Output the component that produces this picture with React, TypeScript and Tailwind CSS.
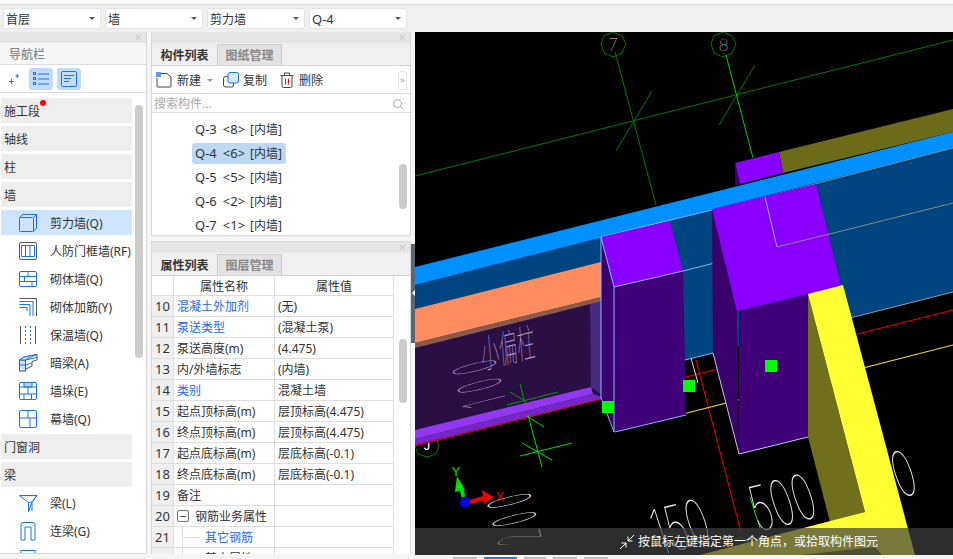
import { Search, X, ChevronsRight } from 'lucide-react';
import type { ReactNode } from 'react';

const blue = '#1a73e8';

function Icon({ children }: { children: ReactNode }) {
  return (
    <svg width="20" height="20" viewBox="0 0 20 20" fill="none" stroke={blue} strokeWidth="1" className="shrink-0">
      {children}
    </svg>
  );
}

const icons: Record<string, ReactNode> = {
  shear: (
    <Icon>
      <rect x="1.5" y="4.5" width="14" height="14" rx="1" />
      <path d="M1.5 4.5 L5 1.5 H18.5 V15 L15.5 18.5 M15.5 4.5 L18.5 1.5" />
    </Icon>
  ),
  frame: (
    <Icon>
      <rect x="1.5" y="1.5" width="17" height="17" rx="1.5" stroke="#555" />
      <path d="M3.5 4.5 H16.5 V15.5 H3.5 Z M7.5 4.5 V15.5 M12 4.5 V15.5" />
    </Icon>
  ),
  brick: (
    <Icon>
      <rect x="1.5" y="2.5" width="17" height="15" rx="1.5" />
      <path d="M1.5 7.5 H18.5 M1.5 12.5 H18.5 M10 2.5 V7.5 M6.5 7.5 V12.5 M14 12.5 V17.5" />
    </Icon>
  ),
  rebar: (
    <Icon>
      <path d="M1.5 4.5 H15 V19 M1.5 7.5 H12 V19 M1.5 10.5 H9 V14" />
      <path d="M18.5 1.5 V19 M1.5 1.5 H18.5" stroke="#555" />
    </Icon>
  ),
  insulation: (
    <Icon>
      <path d="M2.5 1 V19 M17.5 1 V19" stroke="#555" />
      <path d="M7.5 1 V19 M12.5 1 V19" strokeDasharray="2 2" />
    </Icon>
  ),
  hidden: (
    <Icon>
      <path d="M1.5 7 L6 4 L19 1.5 V7 L14 8.5 V13 L6 17" stroke="#555" />
      <rect x="1.5" y="7" width="6" height="11" fill="#cfe2fb" stroke="#555" />
      <path d="M1.5 7 L6 4 L19 1.5 L14 3.5 L7.5 7 Z" fill="#cfe2fb" />
      <path d="M7.5 7 L19 4.5 M1.5 12 H7.5 M7.5 12 L14 10" />
    </Icon>
  ),
  pier: (
    <Icon>
      <rect x="1.5" y="1.5" width="17" height="17" rx="1.5" />
      <path d="M6 1.5 H14 V6 H6 Z" fill="#bcd8f8" />
      <path d="M1.5 6 H18.5 M1.5 13 H18.5 M10 6 V13 M6 13 V18.5 M13.5 13 V18.5" />
    </Icon>
  ),
  curtain: (
    <Icon>
      <rect x="1.5" y="1.5" width="17" height="17" rx="1.5" />
      <path d="M1.5 9 H18.5 M10 1.5 V9 M12 9 V18.5" />
    </Icon>
  ),
  beam: (
    <Icon>
      <path d="M1.5 2.5 H19 L14 9 L10.5 18.5 V9.5 Z M10.5 9.5 L14 9 L19 2.5" />
      <path d="M14 9 V18" />
    </Icon>
  ),
  link: (
    <Icon>
      <path d="M3 19 V3.5 Q3 1.5 5 1.5 H15 Q17 1.5 17 3.5 V19 M3 19 H7 V6 H13 V19 H17" />
    </Icon>
  ),
  ring: (
    <Icon>
      <rect x="3" y="1.5" width="14" height="16" />
      <rect x="6" y="4.5" width="8" height="6" />
    </Icon>
  ),
};

const navRows: { label: string; icon?: string; active?: boolean; dot?: boolean }[] = [
  { label: '施工段', dot: true },
  { label: '轴线' },
  { label: '柱' },
  { label: '墙' },
  { label: '剪力墙(Q)', icon: 'shear', active: true },
  { label: '人防门框墙(RF)', icon: 'frame' },
  { label: '砌体墙(Q)', icon: 'brick' },
  { label: '砌体加筋(Y)', icon: 'rebar' },
  { label: '保温墙(Q)', icon: 'insulation' },
  { label: '暗梁(A)', icon: 'hidden' },
  { label: '墙垛(E)', icon: 'pier' },
  { label: '幕墙(Q)', icon: 'curtain' },
  { label: '门窗洞' },
  { label: '梁' },
  { label: '梁(L)', icon: 'beam' },
  { label: '连梁(G)', icon: 'link' },
  { label: '圈梁(B)', icon: 'ring' },
];

const components = [
  { code: 'Q-3', count: 8 },
  { code: 'Q-4', count: 6, active: true },
  { code: 'Q-5', count: 5 },
  { code: 'Q-6', count: 2 },
  { code: 'Q-7', count: 1 },
];

const props: { no: number; name: string; value?: string; link?: boolean }[] = [
  { no: 10, name: '混凝土外加剂', value: '(无)', link: true },
  { no: 11, name: '泵送类型', value: '(混凝土泵)', link: true },
  { no: 12, name: '泵送高度(m)', value: '(4.475)' },
  { no: 13, name: '内/外墙标志', value: '(内墙)' },
  { no: 14, name: '类别', value: '混凝土墙', link: true },
  { no: 15, name: '起点顶标高(m)', value: '层顶标高(4.475)' },
  { no: 16, name: '终点顶标高(m)', value: '层顶标高(4.475)' },
  { no: 17, name: '起点底标高(m)', value: '层底标高(-0.1)' },
  { no: 18, name: '终点底标高(m)', value: '层底标高(-0.1)' },
  { no: 19, name: '备注' },
];

function Select({ label }: { label: string }) {
  return (
    <div className="flex h-[21px] w-[98px] items-center justify-between rounded-[3px] border border-[#e4e4e4] bg-white pl-[2px] pr-[5px]">
      <span className={`pt-[2px] ${label.startsWith('Q') ? 'text-[13px]' : ''}`}>{label}</span>
      <span className="h-0 w-0 border-x-[3px] border-t-[3px] border-x-transparent border-t-[#555]" />
    </div>
  );
}

function PanelHeader() {
  return (
    <div className="flex h-[11px] shrink-0 items-center justify-end bg-[#e5e5e5] pr-[3px] text-[#999]">
      <X size={9} strokeWidth={1.2} />
    </div>
  );
}

function Tabs({ first, second }: { first: string; second: string }) {
  return (
    <div className="flex h-[23px] shrink-0 border-b border-[#d4d4d4] bg-[#f0f0f0] pt-px font-bold">
      <div className="flex w-[65px] items-center justify-center pt-[2px] text-[#333]">{first}</div>
      <div className="flex w-[65px] items-center justify-center border-x border-t border-[#ccc] bg-[#e2e2e2] pt-[2px] text-[#888]">
        {second}
      </div>
    </div>
  );
}

function NavBar() {
  return (
    <aside className="relative mb-px flex w-[147px] shrink-0 flex-col overflow-hidden border-r border-b border-[#d8d8d8] bg-white">
      <PanelHeader />
      <div className="flex h-[22px] shrink-0 items-center border-b border-[#ddd] bg-[#f7f7f7] pl-[9px] pt-[2px] font-medium text-[#888]">
        导航栏
      </div>
      <div className="flex h-[28px] shrink-0 items-center border-b border-[#ddd] pl-[8px]">
        <svg width="12" height="12" viewBox="0 0 12 12" stroke={blue} className="mr-[9px]">
          <path d="M1 8.5 H6 M3.5 6 V11 M7.5 3 H11 M9.2 1 V5" />
        </svg>
        <div className="mr-[4px] flex h-[22px] w-[24px] items-center justify-center rounded-[3px] bg-[#c3dcf5]">
          <svg width="16" height="14" viewBox="0 0 16 14" fill="none" stroke={blue}>
            <path d="M5 2 H16 M5 7 H16 M5 12 H16" />
            <rect x="0.5" y="0.5" width="2" height="2" />
            <rect x="0.5" y="5.5" width="2" height="2" />
            <rect x="0.5" y="10.5" width="2" height="2" />
          </svg>
        </div>
        <div className="flex h-[22px] w-[24px] items-center justify-center rounded-[3px] bg-[#c3dcf5]">
          <svg width="16" height="16" viewBox="0 0 16 16" fill="none" stroke={blue}>
            <rect x="0.5" y="0.5" width="15" height="15" rx="1" />
            <path d="M3 4.5 H13 M3 7.5 H10 M3 10.5 H8" />
          </svg>
        </div>
      </div>
      <div className="relative min-h-0 flex-1 overflow-hidden pt-[5px]">
        <div className="flex w-[132px] flex-col gap-[3px] pl-[1px]">
          {navRows.map((row) => (
            <div
              key={row.label}
              className={`relative flex h-[25px] shrink-0 items-center whitespace-nowrap ${
                row.active ? 'bg-[#cfe5ff]' : row.icon ? '' : 'bg-[#eeeeee]'
              } ${row.icon ? 'pl-[17px]' : 'pl-[3px]'}`}
            >
              {row.icon && <span className="mr-[12px]">{icons[row.icon]}</span>}
              <span className="pt-[2px]">{row.label}</span>
              {row.dot && <span className="absolute left-[39px] top-[2px] h-[6px] w-[6px] rounded-full bg-[#f00]" />}
            </div>
          ))}
        </div>
        <div className="absolute left-[135px] top-[12px] h-[253px] w-[8px] rounded-full bg-[#cccccc]" />
      </div>
    </aside>
  );
}

function ComponentList() {
  return (
    <section className="flex h-[204px] shrink-0 flex-col border border-t-0 border-[#d8d8d8] bg-white">
      <PanelHeader />
      <Tabs first="构件列表" second="图纸管理" />
      <div className="flex h-[28px] shrink-0 items-center border-b border-[#ddd] pl-[4px] pt-px">
        <svg width="16" height="16" viewBox="0 0 16 16" fill="none" stroke="#444">
          <path d="M5 1.5 H11 L15 5 V14 Q15 15 14 15 H2 Q1 15 1 14 V6" />
          <rect x="0" y="0" width="5" height="5" fill="#5b9cf0" stroke="none" />
        </svg>
        <span className="ml-[5px] pt-[2px]">新建</span>
        <span className="ml-[6px] h-0 w-0 border-x-[3px] border-t-[3px] border-x-transparent border-t-[#999]" />
        <svg width="16" height="16" viewBox="0 0 16 16" fill="none" className="ml-[10px]">
          <rect x="0.5" y="4.5" width="10" height="10.5" rx="2" stroke="#444" />
          <rect x="5" y="0.5" width="10.5" height="10.5" rx="2" stroke={blue} fill="#d7e8fc" />
        </svg>
        <span className="ml-[4px] pt-[2px]">复制</span>
        <svg width="14" height="16" viewBox="0 0 14 16" fill="none" stroke="#444" className="ml-[13px]">
          <path d="M0.5 3.5 H13.5 M4.5 3.5 V1 H9.5 V3.5 M2 3.5 V14 Q2 15.5 3.5 15.5 H10.5 Q12 15.5 12 14 V3.5" />
          <path d="M5.5 6.5 V12.5 M8.5 6.5 V12.5" stroke="#e11" />
        </svg>
        <span className="ml-[5px] pt-[2px]">删除</span>
        <div className="ml-auto mr-[3px] flex h-[19px] w-[9px] items-center justify-center rounded-[3px] border border-[#e4e4e4] text-[#555]">
          <ChevronsRight size={9} />
        </div>
      </div>
      <div className="flex h-[19px] shrink-0 items-center justify-between border-b border-[#ddd] pl-[2px] pr-[6px] pt-[2px] text-[#aaa]">
        <span>搜索构件...</span>
        <Search size={12} />
      </div>
      <div className="relative flex min-h-0 flex-1 flex-col overflow-hidden pt-[4px]">
        {components.map((c) => (
          <div key={c.code} className="flex h-[24px] shrink-0 items-center pl-[40px]">
            <div
              className={`flex h-[21px] w-[94px] items-center whitespace-nowrap rounded-[3px] pl-[3px] pt-px ${
                c.active ? 'bg-[#bcd8f5]' : ''
              }`}
            >
              <span className="text-[13px]">{c.code}</span>
              <span className="ml-[6px] text-[13px]">&lt;{c.count}&gt;</span>
              <span className="ml-[5px]">[内墙]</span>
            </div>
          </div>
        ))}
        <div className="absolute left-[247px] top-[51px] h-[45px] w-[8px] rounded-full bg-[#cccccc]" />
      </div>
    </section>
  );
}

function PropCell({ children, className = '' }: { children?: ReactNode; className?: string }) {
  return <div className={`flex items-center whitespace-nowrap border-r border-b border-[#dedede] ${className}`}>{children}</div>;
}

function PropRow({ no, children, value }: { no: number; children?: ReactNode; value?: string }) {
  return (
    <div className="flex h-[21px] shrink-0">
      <PropCell className="w-[22px] justify-center bg-[#f0f0f0] pt-px text-[13px]">{no}</PropCell>
      <PropCell className="w-[101px] pl-[3px]">{children}</PropCell>
      <PropCell className="w-[119px] pl-[3px] pt-[2px]">{value}</PropCell>
    </div>
  );
}

function TreeBranch() {
  return (
    <span className="ml-[5px] mr-[6px] flex h-full w-[17px] items-center border-l border-[#ddd]">
      <span className="h-px w-full bg-[#ddd]" />
    </span>
  );
}

function PropertyList() {
  return (
    <section className="mb-px mt-[5px] flex min-h-0 flex-1 flex-col overflow-hidden border-x border-[#d8d8d8] bg-white">
      <div className="border-t border-[#d8d8d8]">
        <PanelHeader />
      </div>
      <Tabs first="属性列表" second="图层管理" />
      <div className="relative min-h-0 flex-1 overflow-hidden">
        <div className="flex h-[20px]">
          <PropCell className="w-[22px]" />
          <PropCell className="w-[101px] justify-center pt-[2px]">属性名称</PropCell>
          <PropCell className="w-[119px] justify-center pt-[2px]">属性值</PropCell>
        </div>
        {props.map((p) => (
          <PropRow key={p.no} no={p.no} value={p.value}>
            <span className={`pt-[2px] ${p.link ? 'text-[#2a68ee]' : ''}`}>{p.name}</span>
          </PropRow>
        ))}
        <PropRow no={20}>
          <span className="mr-[6px] flex h-[12px] w-[12px] items-center justify-center rounded-[2px] border border-[#777]">
            <span className="h-px w-[6px] bg-[#555]" />
          </span>
          <span className="pt-[2px]">钢筋业务属性</span>
        </PropRow>
        <PropRow no={21}>
          <TreeBranch />
          <span className="pt-[2px] text-[#2a68ee]">其它钢筋</span>
        </PropRow>
        <PropRow no={22}>
          <TreeBranch />
          <span className="pt-[2px]">其它属性</span>
        </PropRow>
        <div className="absolute left-[247px] top-[63px] h-[64px] w-[8px] rounded-full bg-[#cccccc]" />
      </div>
    </section>
  );
}

function CadView() {
  return (
    <svg viewBox="415 32 538 523" className="block h-full w-full" fill="none">
      {/* axis grid */}
      <g stroke="#007a00" strokeWidth="1">
        <polygon points="613,32 622,36 626,44 622,53 613,57 604,53 601,44 604,36" />
        <polygon points="723,32 732,36 736,44 732,53 723,57 714,53 711,44 714,36" />
        <path d="M615 52 L656 205 M652 91 L616 151 M415 176 L953 40 M755 65 L719 125" />
        <polygon points="427,433 436,437 439,446 436,454 427,457 418,454 415,446 418,437" />
        <polygon points="741,537 750,540 753,548 750,555 732,555 729,548 732,540" />
      </g>
      <path d="M726 55 L753 158" stroke="#00d000" />
      <g fontFamily="Inter, sans-serif" fontWeight="100" fill="#fff">
        <text x="613.5" y="51" fontSize="17" textAnchor="middle" fill="#ddd">7</text>
        <text x="723.5" y="51" fontSize="17" textAnchor="middle" fill="#ddd">8</text>
        <text x="427" y="450" fontSize="13" textAnchor="middle" fontFamily="Liberation Sans, sans-serif">J</text>
      </g>

      {/* lines on the floor */}
      <path d="M415 445 L953 310 M696 360 L741 532" stroke="#f00000" strokeWidth="1" />
      <path d="M683 414 L953 345" stroke="#e8d830" strokeWidth="1.2" />
      <path d="M691 358 L698 383" stroke="#ddd" />

      {/* back olive and column */}
      <polygon points="779,152 953,109 953,132 783,173" fill="#6b6b1a" />
      <polygon points="735,163 779,152 783,173 740,184" fill="#8a00ff" />
      <polygon points="735,163 740,184 735,185" fill="#3a0070" />

      {/* wall */}
      <polygon points="415,285 953,148 953,292 713,353 601,381 415,381" fill="#004480" />
      <polygon points="415,267 953,132 953,148 415,285" fill="#0090ff" />
      <path d="M601 237 L765 197" stroke="#8ab4ff" strokeWidth="1" />
      <path d="M765 197 L953 148" stroke="#8a8a8a" strokeWidth="1" />
      <path d="M683 271 L778 247" stroke="#8ab4ff" strokeWidth="1" />
      <path d="M778 247 L953 203" stroke="#8a8a8a" strokeWidth="1" />
      <path d="M601 381 L713 353" stroke="#8ab4ff" />
      <path d="M850 318 L953 292" stroke="#999" />

      {/* pit under the orange beam */}
      <polygon points="415,345 605,298 605,398 415,445" fill="#2a0f45" />
      <polygon points="590,304 605,298 605,397 591,387" fill="#4a2a80" />
      <polygon points="415,430 591,387 593,394 415,439" fill="#9238f0" />
      <polygon points="415,439 593,394 605,398 415,445" fill="#7428c8" />
      <path d="M415 446 L605 398" stroke="#f00000" />
      <polygon points="415,309 601,262 610,295 415,343" fill="#ff8c5f" />
      <polygon points="415,343 610,295 610,299 415,348" fill="#8a5a48" />

      {/* front column */}
      <polygon points="601,237 614,287 615,432 601,398" fill="#3a006e" />
      <polygon points="614,287 683,271 686,415 615,432" fill="#3f0078" />
      <polygon points="601,237 670,221 683,271 614,287" fill="#8a00ff" />
      <path d="M601 398 V237 L614 287 V432 L601 398 M614 287 L683 271 M615 432 L686 415" stroke="#8ab4ff" />

      {/* right column */}
      <polygon points="712,209 737,311 739,454 713,353" fill="#3a006c" />
      <polygon points="739,311 808,294 808,437 739,454" fill="#3f0078" />
      <polygon points="712,209 816,184 841,286 737,311" fill="#8a00ff" />
      <path d="M765 197 L777 247" stroke="#8ab4ff" />
      <path d="M777 247 L829 234" stroke="#8a8a8a" />
      <path d="M713 353 L739 454 L808 437" stroke="#c8c8d8" />

      {/* yellow wall */}
      <polygon points="808,294 808,437 830,522 865,512" fill="#6f6f1c" />
      <polygon points="808,294 843,285 915,555 700,555 865,512" fill="#ffff33" />
      <polygon points="875,547 882,555 800,555" fill="#6f6f1c" />

      {/* grips */}
      <g fill="#00ff00">
        <rect x="602" y="401" width="12" height="12" />
        <rect x="683" y="380" width="12" height="12" />
        <rect x="765" y="360" width="12" height="12" />
      </g>

      {/* grid crosses */}
      <g stroke="#00a000">
        <path d="M507 405 L558 392 M520 384 L525 403 M510 392 L525 401" />
      </g>
      <g stroke="#00e000">
        <path d="M528 415 L542 467 M527 416 L544 427 M520 456 L572 443 M522 443 L552 460 M750 497 L760 528" />
      </g>

      {/* CAD notes */}
      <g fontFamily="Inter, sans-serif" fontWeight="100">
        <text transform="matrix(-0.083 -0.3 1 -0.25 506 400)" fontSize="58" letterSpacing="27" fill="#a896c8">100</text>
        <text transform="matrix(-0.083 -0.3 1 -0.25 542 538)" fontSize="58" letterSpacing="27" fill="#e8e8e8">200</text>
        <text transform="matrix(0.6 -0.15 0.33 1 758 532)" fontSize="60" fill="#e8e8e8">500</text>
        <text transform="matrix(0.6 -0.15 0.33 1 660 555)" fontSize="60" fill="#e8e8e8">150</text>
        <text transform="matrix(0.6 -0.15 0.33 1 900 498)" fontSize="60" fill="#e8e8e8">0</text>
      </g>
      <text transform="matrix(0.58 -0.145 0.1 1.25 482 369)" fontSize="31" fill="#a896c8" fontFamily="Noto Sans CJK SC, sans-serif" fontWeight="100">
        小偏柱
      </text>

      {/* axis gizmo */}
      <path d="M465 502 L460 484" stroke="#00e000" strokeWidth="4" />
      <polygon points="457,476 465,490 455,492" fill="#00e000" />
      <path d="M467 503 L484 498" stroke="#f00000" strokeWidth="4" />
      <polygon points="494,497 482,490 484,504" fill="#f00000" />
      <circle cx="465" cy="502" r="5.5" fill="#0000d8" />
      <text x="456" y="476" fontSize="13" textAnchor="middle" fill="#00e000" fontFamily="Liberation Sans, sans-serif">Y</text>
      <text x="500" y="501" fontSize="13" textAnchor="middle" fill="#f00000" fontFamily="Liberation Sans, sans-serif">X</text>
    </svg>
  );
}

export default function App() {
  return (
    <div className="flex h-[559px] w-[953px] flex-col overflow-hidden bg-[#f5f5f5] font-['Noto_Sans','Noto_Sans_CJK_SC',sans-serif] text-[12px] leading-none text-[#333]">
      <div className="h-[5px] shrink-0 border-b border-[#ddd] bg-[#fafafa]" />
      <div className="flex h-[27px] shrink-0 items-center gap-[4px] bg-[#f0f0f0] pl-[3px]">
        <Select label="首层" />
        <Select label="墙" />
        <Select label="剪力墙" />
        <Select label="Q-4" />
      </div>
      <div className="flex min-h-0 flex-1">
        <NavBar />
        <div className="ml-[4px] flex w-[260px] shrink-0 flex-col">
          <ComponentList />
          <PropertyList />
        </div>
        <div className="flex w-[4px] shrink-0 flex-col bg-[#f5f5f5] pt-[212px]">
          <div className="relative h-[99px] bg-[#5c6670]">
            <span className="absolute left-[1px] top-[46px] h-0 w-0 border-y-[3px] border-r-[3px] border-y-transparent border-r-white" />
          </div>
        </div>
        <div className="relative min-w-0 flex-1 overflow-hidden bg-black">
          <CadView />
          <div className="absolute inset-x-0 bottom-0 flex h-[27px] items-center bg-[#404040]/70 pl-[204px] text-white">
            <svg width="16" height="16" viewBox="0 0 16 16" stroke="#fff" fill="none" className="mr-[3px]">
              <path d="M1 15 L7 9 M2.5 9 H7 V13.5 M15 1 L9 7 M9 2.5 V7 H13.5" />
            </svg>
            <span className="pt-px">按鼠标左键指定第一个角点，或拾取构件图元</span>
          </div>
        </div>
      </div>
      <div className="flex h-[4px] shrink-0 items-end gap-[7px] pl-[453px]">
        <div className="h-[2px] w-[24px] bg-[#bbb]" />
        <div className="h-[2px] w-[33px] bg-[#2b7de0]" />
        <div className="h-[2px] w-[22px] bg-[#bbb]" />
        <div className="h-[2px] w-[24px] bg-[#bbb]" />
        <div className="h-[2px] w-[24px] bg-[#bbb]" />
      </div>
    </div>
  );
}
